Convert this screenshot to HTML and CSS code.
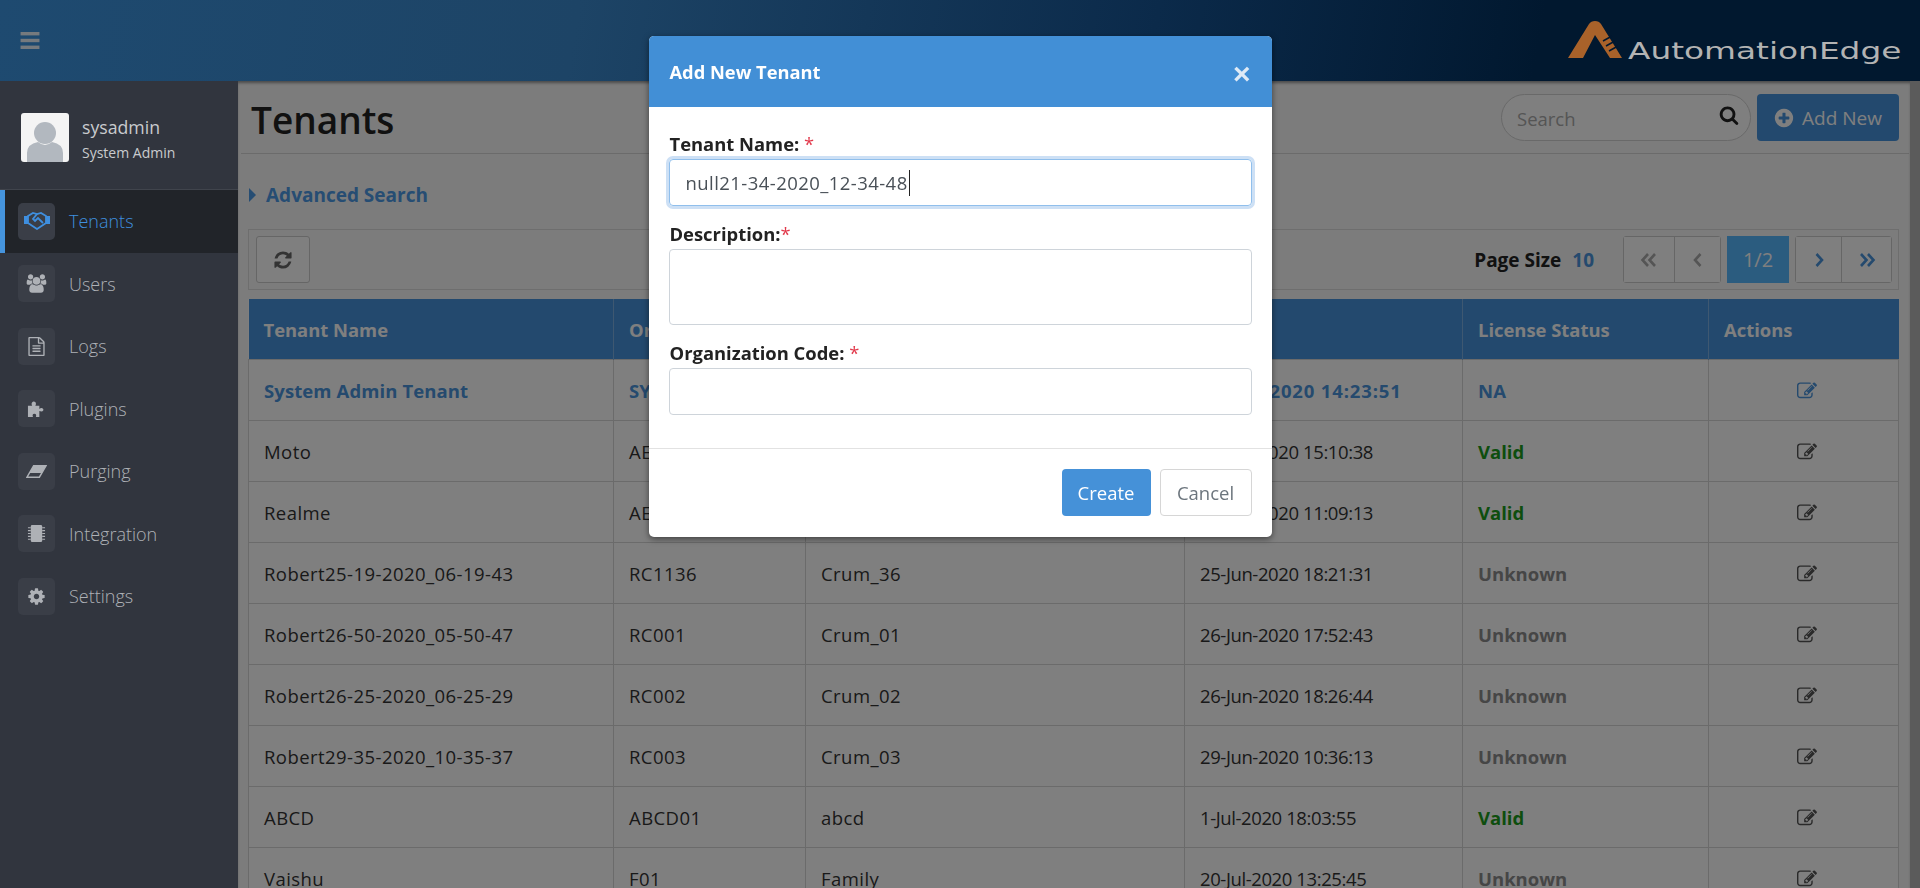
FILE: index.html
```html
<!DOCTYPE html>
<html lang="en">
<head>
    <meta charset="UTF-8">
    <title>Tenants</title>
    <link rel="stylesheet" href="styles.css">
</head>
<body>
    <svg class="icon-defs" width="0" height="0">
        <symbol id="i-edit" viewBox="0 0 1792 1792"><path d="M888 1184l116-116-152-152-116 116v56h96v96h56zm440-720q-16-16-33 1l-350 350q-17 17-1 33t33-1l350-350q17-17 1-33zm80 594v190q0 119-84.5 203.5t-203.5 84.5h-832q-119 0-203.5-84.5t-84.5-203.5v-832q0-119 84.5-203.5t203.5-84.5h832q63 0 117 25 15 7 18 23 3 17-9 29l-49 49q-14 14-32 8-23-6-45-6h-832q-66 0-113 47t-47 113v832q0 66 47 113t113 47h832q66 0 113-47t47-113v-126q0-13 9-22l64-64q15-15 35-7t20 29zm-96-738l288 288-672 672h-288v-288zm444 132l-92 92-288-288 92-92q28-28 68-28t68 28l152 152q28 28 28 68t-28 68z"/></symbol>
    </svg>

    <header class="topbar">
        <svg class="hamburger" viewBox="0 0 20 18"><rect width="20" height="3.6" y="0"/><rect width="20" height="3.6" y="7.2"/><rect width="20" height="3.6" y="14.4"/></svg>
        <div class="logo">
            <svg class="logo-mark" viewBox="0 0 55 38">
                <path d="M0 37 L21 3 Q23 0 27 0 Q31 0 33 3 L54 37 H42 L27 14 L15 37 Z" fill="#a9622a"/>
                <path d="M35 20 L44 15 M38 25 L47 20 M41 30 L50 25" stroke="#00172f" stroke-width="1.5"/>
            </svg>
            <span class="logo-text">AutomationEdge</span>
        </div>
    </header>

    <div class="layout">
        <aside class="sidebar">
            <div class="user-block">
                <svg class="avatar" viewBox="0 0 48 49">
                    <rect width="48" height="49" rx="3" fill="#f4f4f4"/>
                    <circle cx="24" cy="20" r="11" fill="#b2b8bf"/>
                    <path d="M6 49 V40 Q6 31 17 29 Q24 35 31 29 Q42 31 42 40 V49 Z" fill="#b2b8bf"/>
                </svg>
                <div class="user-info">
                    <div class="user-name">sysadmin</div>
                    <div class="user-role">System Admin</div>
                </div>
            </div>
            <nav class="menu">
                <a class="menu-item active">
                    <span class="menu-icon">
                        <svg viewBox="0 0 26 18" fill="none" stroke="currentColor" stroke-width="1.8"><path d="M0 4h4v8H0zM22 4h4v8h-4z" fill="currentColor" stroke="none"/><path d="M4 4l5-3 4 1 4-1 5 3v7l-9 6-9-6z"/><path d="M13 2L9 7l2 2 3-3 5 5"/></svg>
                    </span>
                    <span>Tenants</span>
                </a>
                <a class="menu-item">
                    <span class="menu-icon">
                        <svg viewBox="0 0 2048 1792" fill="currentColor"><path d="M657 896q-162 5-265 128h-134q-82 0-138-40.5t-56-118.5q0-353 124-353 6 0 43.5 21t97.5 42.5 119 21.5q67 0 133-23-5 37-5 66 0 139 81 256zm1071 637q0 120-73 189.5t-194 69.5h-874q-121 0-194-69.5t-73-189.5q0-53 3.5-103.5t14-109 26.5-108.5 43-97.5 62-81 85.5-53.5 111.5-20q10 0 43 21.5t73 48 107 48 135 21.5 135-21.5 107-48 73-48 43-21.5q61 0 111.5 20t85.5 53.5 62 81 43 97.5 26.5 108.5 14 109 3.5 103.5zm-1024-1277q0 106-75 181t-181 75-181-75-75-181 75-181 181-75 181 75 75 181zm704 384q0 159-112.5 271.5t-271.5 112.5-271.5-112.5-112.5-271.5 112.5-271.5 271.5-112.5 271.5 112.5 112.5 271.5zm576 225q0 78-56 118.5t-138 40.5h-134q-103-123-265-128 81-117 81-256 0-29-5-66 66 23 133 23 59 0 119-21.5t97.5-42.5 43.5-21q124 0 124 353zm-128-609q0 106-75 181t-181 75-181-75-75-181 75-181 181-75 181 75 75 181z"/></svg>
                    </span>
                    <span>Users</span>
                </a>
                <a class="menu-item">
                    <span class="menu-icon">
                        <svg viewBox="0 0 1792 1792" fill="currentColor"><path d="M1596 380q28 28 48 76t20 88v1152q0 40-28 68t-68 28h-1344q-40 0-68-28t-28-68v-1600q0-40 28-68t68-28h896q40 0 88 20t76 48zm-444-244v376h376q-10-29-22-41l-313-313q-12-12-41-22zm384 1528v-1024h-416q-40 0-68-28t-28-68v-416h-768v1536h1280zm-1024-864q0-14 9-23t23-9h704q14 0 23 9t9 23v64q0 14-9 23t-23 9h-704q-14 0-23-9t-9-23v-64zm736 224q14 0 23 9t9 23v64q0 14-9 23t-23 9h-704q-14 0-23-9t-9-23v-64q0-14 9-23t23-9h704zm0 256q14 0 23 9t9 23v64q0 14-9 23t-23 9h-704q-14 0-23-9t-9-23v-64q0-14 9-23t23-9h704z"/></svg>
                    </span>
                    <span>Logs</span>
                </a>
                <a class="menu-item">
                    <span class="menu-icon">
                        <svg viewBox="0 0 20 20" fill="currentColor"><path d="M1 7h4.5C4.5 5.8 4.5 3 7 2.600 9.600 2.400 10 5.600 8.700 7H13v3.500c1.300-1.200 3.200-1.200 4 0 .9 1.400-.3 3.400-4 2.200V19H9.300c.8-1.500.4-3.400-1.500-3.400-2 0-2.300 2-1.400 3.400H1z"/></svg>
                    </span>
                    <span>Plugins</span>
                </a>
                <a class="menu-item">
                    <span class="menu-icon">
                        <svg viewBox="0 0 22 14"><path d="M8 1h13L14 13H1z" fill="none" stroke="currentColor" stroke-width="1.500"/><path d="M8 1h13l-4.500 7.500h-13z" fill="currentColor"/></svg>
                    </span>
                    <span>Purging</span>
                </a>
                <a class="menu-item">
                    <span class="menu-icon">
                        <svg viewBox="0 0 18 20"><rect x="3" y="1" width="12" height="18" rx="1.500" fill="currentColor"/><path d="M0 4h3M0 7h3M0 10h3M0 13h3M0 16h3M15 4h3M15 7h3M15 10h3M15 13h3M15 16h3" stroke="currentColor" stroke-width="1.200"/></svg>
                    </span>
                    <span>Integration</span>
                </a>
                <a class="menu-item">
                    <span class="menu-icon">
                        <svg viewBox="0 0 1792 1792" fill="currentColor"><path d="M1152 896q0-106-75-181t-181-75-181 75-75 181 75 181 181 75 181-75 75-181zm512-109v222q0 12-8 23t-20 13l-185 28q-19 54-39 91 35 50 107 138 10 12 10 25t-9 23q-27 37-99 108t-94 71q-12 0-26-9l-138-108q-44 23-91 38-16 136-29 186-7 28-36 28h-222q-14 0-24.500-8.500t-11.500-21.500l-28-184q-49-16-90-37l-141 107q-10 9-25 9-14 0-25-11-126-114-165-168-7-10-7-23 0-12 8-23 15-21 51-66.500t54-70.500q-27-50-41-99l-183-27q-13-2-21-12.500t-8-23.500v-222q0-12 8-23t19-13l186-28q14-46 39-92-40-57-107-138-10-12-10-24 0-10 9-23 26-36 98.500-107.500t94.500-71.500q13 0 26 10l138 107q44-23 91-38 16-136 29-186 7-28 36-28h222q14 0 24.500 8.500t11.500 21.500l28 184q49 16 90 37l142-107q9-9 24-9 13 0 25 10 129 119 165 170 7 8 7 22 0 12-8 23-15 21-51 66.500t-54 70.500q26 50 41 98l183 28q13 2 21 12.500t8 23.500z"/></svg>
                    </span>
                    <span>Settings</span>
                </a>
            </nav>
        </aside>

        <main class="main">
            <div class="title-bar">
                <h1 class="page-title">Tenants</h1>
                <div class="title-actions">
                    <div class="search">
                        <span class="search-text">Search</span>
                        <svg class="search-icon" viewBox="0 0 1792 1792"><path d="M1216 832q0-185-131.500-316.500t-316.500-131.500-316.500 131.500-131.500 316.500 131.500 316.500 316.500 131.500 316.500-131.500 131.500-316.500zm512 832q0 52-38 90t-90 38q-54 0-90-38l-343-342q-179 124-399 124-143 0-273.500-55.500t-225-150-150-225-55.500-273.500 55.500-273.500 150-225 225-150 273.500-55.500 273.500 55.500 225 150 150 225 55.500 273.500q0 220-124 399l343 343q37 37 37 90z"/></svg>
                    </div>
                    <button class="btn-add">
                        <svg viewBox="0 0 1792 1792"><path transform="translate(-64 -64) scale(1.070)" d="M1344 960v-128q0-26-19-45t-45-19h-256v-256q0-26-19-45t-45-19h-128q-26 0-45 19t-19 45v256h-256q-26 0-45 19t-19 45v128q0 26 19 45t45 19h256v256q0 26 19 45t45 19h128q26 0 45-19t19-45v-256h256q26 0 45-19t19-45zm320-64q0 209-103 385.500t-279.500 279.500-385.500 103-385.500-103-279.500-279.500-103-385.500 103-385.500 279.500-279.500 385.500-103 385.500 103 279.500 279.500 103 385.500z"/></svg>
                        Add New
                    </button>
                </div>
            </div>

            <div class="advanced-search"><span class="caret-right"></span>Advanced Search</div>

            <div class="toolbar">
                <button class="tool-btn">
                    <svg viewBox="0 0 1792 1792"><path d="M1639 1056q0 5-1 7-64 268-268 434.500t-478 166.500q-146 0-282.500-55t-243.500-157l-129 129q-19 19-45 19t-45-19-19-45v-448q0-26 19-45t45-19h448q26 0 45 19t19 45-19 45l-137 137q71 66 161 102t187 36q134 0 250-65t186-179q11-17 53-117 8-23 30-23h192q13 0 22.500 9.500t9.500 22.500zm25-800v448q0 26-19 45t-45 19h-448q-26 0-45-19t-19-45 19-45l138-138q-148-137-349-137-134 0-250 65t-186 179q-11 17-53 117-8 23-30 23h-199q-13 0-22.500-9.500t-9.500-22.500v-7q65-268 270-434.500t480-166.500q146 0 284 55.500t245 156.500l130-129q19-19 45-19t45 19 19 45z"/></svg>
                </button>
                <div class="pager">
                    <span class="page-size">Page Size</span>
                    <span class="page-size-value">10</span>
                    <div class="page-group">
                        <button class="page-btn first muted"><svg viewBox="0 0 18 14"><path d="M8 1L2.500 7 8 13M15 1L9.500 7 15 13"/></svg></button>
                        <button class="page-btn muted"><svg viewBox="0 0 18 14"><path d="M11.500 1L6 7l5.500 6"/></svg></button>
                    </div>
                    <span class="page-current">1/2</span>
                    <div class="page-group">
                        <button class="page-btn next"><svg viewBox="0 0 18 14"><path d="M6.500 1L12 7l-5.500 6"/></svg></button>
                        <button class="page-btn last"><svg viewBox="0 0 18 14"><path d="M3 1l5.500 6L3 13M10 1l5.500 6-5.500 6"/></svg></button>
                    </div>
                </div>
            </div>

            <table class="tenants">
                <colgroup>
                    <col class="c-name"><col class="c-code"><col class="c-desc"><col class="c-date"><col class="c-status"><col>
                </colgroup>
                <thead>
                    <tr><th>Tenant Name</th><th>Organization Code</th><th>Description</th><th>Date</th><th>License Status</th><th>Actions</th></tr>
                </thead>
                <tbody>
                    <tr class="system">
                        <td>System Admin Tenant</td><td>SYSADMIN</td><td>System Admin</td><td class="date">16-Jun-2020 14:23:51</td><td>NA</td>
                        <td class="act"><svg class="edit"><use href="#i-edit"/></svg></td>
                    </tr>
                    <tr>
                        <td>Moto</td><td>AE001</td><td>Moto</td><td class="date">23-Jun-2020 15:10:38</td><td class="valid">Valid</td>
                        <td class="act"><svg class="edit"><use href="#i-edit"/></svg></td>
                    </tr>
                    <tr>
                        <td>Realme</td><td>AE002</td><td>Realme</td><td class="date">24-Jun-2020 11:09:13</td><td class="valid">Valid</td>
                        <td class="act"><svg class="edit"><use href="#i-edit"/></svg></td>
                    </tr>
                    <tr>
                        <td>Robert25-19-2020_06-19-43</td><td>RC1136</td><td>Crum_36</td><td class="date">25-Jun-2020 18:21:31</td><td class="unknown">Unknown</td>
                        <td class="act"><svg class="edit"><use href="#i-edit"/></svg></td>
                    </tr>
                    <tr>
                        <td>Robert26-50-2020_05-50-47</td><td>RC001</td><td>Crum_01</td><td class="date">26-Jun-2020 17:52:43</td><td class="unknown">Unknown</td>
                        <td class="act"><svg class="edit"><use href="#i-edit"/></svg></td>
                    </tr>
                    <tr>
                        <td>Robert26-25-2020_06-25-29</td><td>RC002</td><td>Crum_02</td><td class="date">26-Jun-2020 18:26:44</td><td class="unknown">Unknown</td>
                        <td class="act"><svg class="edit"><use href="#i-edit"/></svg></td>
                    </tr>
                    <tr>
                        <td>Robert29-35-2020_10-35-37</td><td>RC003</td><td>Crum_03</td><td class="date">29-Jun-2020 10:36:13</td><td class="unknown">Unknown</td>
                        <td class="act"><svg class="edit"><use href="#i-edit"/></svg></td>
                    </tr>
                    <tr>
                        <td>ABCD</td><td>ABCD01</td><td>abcd</td><td class="date">1-Jul-2020 18:03:55</td><td class="valid">Valid</td>
                        <td class="act"><svg class="edit"><use href="#i-edit"/></svg></td>
                    </tr>
                    <tr>
                        <td>Vaishu</td><td>F01</td><td>Family</td><td class="date">20-Jul-2020 13:25:45</td><td class="unknown">Unknown</td>
                        <td class="act"><svg class="edit"><use href="#i-edit"/></svg></td>
                    </tr>
                </tbody>
            </table>
            <div class="backdrop"></div>
        </main>
        <div class="scrollbar"></div>
    </div>

    <div class="modal-wrap">
        <div class="modal">
            <div class="modal-header">
                <span class="modal-title">Add New Tenant</span>
                <span class="modal-close">&times;</span>
            </div>
            <form class="modal-body">
                <label class="field-label">Tenant Name: <span class="req">*</span></label>
                <div class="input focused">null21-34-2020_12-34-48<span class="text-caret"></span></div>
                <label class="field-label">Description:<span class="req">*</span></label>
                <div class="input area"></div>
                <label class="field-label">Organization Code: <span class="req">*</span></label>
                <div class="input"></div>
            </form>
            <div class="modal-footer">
                <button class="btn-create">Create</button>
                <button class="btn-cancel">Cancel</button>
            </div>
        </div>
    </div>
</body>
</html>
```

FILE: styles.css
```css
* {
    box-sizing: border-box;
}
html, body {
    height: 100%;
}
body {
    margin: 0;
    overflow: hidden;
    font-family: "Open Sans", "Noto Sans", sans-serif;
    font-size: 16px;
    color: #333;
    background-color: #fff;
}
button {
    font-family: inherit;
}
.icon-defs {
    position: absolute;
}

/* header */
.topbar {
    height: 81px;
    display: flex;
    align-items: center;
    justify-content: space-between;
    padding: 0 19px 0 20px;
    background: linear-gradient(100deg, #1e4a70 0%, #1d4466 30%, #0b2a4a 60%, #01182f 80%, #01182f 100%);
}
.hamburger {
    width: 20px;
    height: 17px;
    fill: #767a7e;
}
.logo {
    display: flex;
    align-items: flex-end;
    gap: 5px;
    width: 333px;
    margin-bottom: 2px;
}
.logo-mark {
    width: 55px;
    height: 38px;
}
.logo-text {
    font-family: "DejaVu Sans", sans-serif;
    font-size: 23px;
    line-height: 28px;
    white-space: nowrap;
    color: #b3b3b3;
    margin-bottom: -6px;
    transform: scaleX(1.425);
    transform-origin: left center;
}

.layout {
    display: flex;
    height: calc(100% - 81px);
}

/* sidebar */
.sidebar {
    width: 238px;
    flex-shrink: 0;
    background-color: #31353e;
    color: #aeb1b6;
}
.user-block {
    height: 109px;
    display: flex;
    align-items: center;
    gap: 13px;
    padding: 0 0 0 21px;
    border-bottom: 1px solid #40444c;
}
.avatar {
    width: 48px;
    height: 49px;
    margin-top: 4px;
}
.user-info {
    margin-top: 9px;
}
.user-name {
    font-size: 17.7px;
    line-height: 24px;
    color: #c9cbce;
}
.user-role {
    font-size: 14px;
    line-height: 22px;
    color: #c9cbce;
    margin-top: 3px;
}
.menu-item {
    height: 62.5px;
    display: flex;
    align-items: center;
    gap: 14px;
    padding-left: 18px;
    font-size: 18px;
    font-weight: 300;
}
.menu-item.active {
    background-color: #212429;
    color: #3f8fdf;
    box-shadow: inset 5px 0 0 #4594dd;
}
.menu-icon {
    width: 37px;
    height: 37px;
    border-radius: 5px;
    background-color: #3a3e47;
    display: flex;
    align-items: center;
    justify-content: center;
}
.menu-icon svg {
    width: 21px;
    height: 19px;
}
.menu-item.active .menu-icon svg {
    width: 26px;
    height: 18px;
}

/* main */
.main {
    position: relative;
    flex: 1;
    padding: 0 11px 0 10px;
    background-color: #f8f8f8;
    overflow: hidden;
}
.backdrop {
    position: absolute;
    top: 0;
    left: 0;
    right: 0;
    bottom: 0;
    background-color: rgba(0,0,0,0.5);
    box-shadow: inset 0 3px 3px -1px rgba(0,0,0,0.4);
}
.scrollbar {
    width: 10px;
    flex-shrink: 0;
    background-color: #5b5b5b;
}
.title-bar {
    height: 73px;
    margin: 0 -10px 0 -7px;
    padding: 13px 10px 0 10px;
    display: flex;
    justify-content: space-between;
    border-bottom: 1px solid #d6d6d6;
}
.page-title {
    margin: 1px 0 0;
    font-size: 37px;
    line-height: 50px;
    font-weight: 550;
    color: #222;
}
.title-actions {
    display: flex;
    gap: 6px;
}
.search {
    width: 250px;
    height: 47px;
    display: flex;
    align-items: center;
    justify-content: space-between;
    padding: 2px 11px 0 15px;
    border: 1px solid #d2d2d2;
    border-radius: 24px;
    background-color: #fff;
}
.search-text {
    color: #aaa;
    font-size: 18.5px;
}
.search-icon {
    width: 20px;
    height: 20px;
    fill: #222;
    margin-top: -7px;
}
.btn-add {
    width: 142px;
    height: 47px;
    display: flex;
    align-items: center;
    justify-content: center;
    gap: 8px;
    border: none;
    border-radius: 4px;
    background-color: #4693dd;
    color: #fff;
    font-size: 19px;
}
.btn-add svg {
    width: 20px;
    height: 20px;
    fill: #fff;
}
.advanced-search {
    height: 75px;
    padding-top: 6px;
    display: flex;
    align-items: center;
    font-size: 19px;
    font-weight: 700;
    color: #4d9ae6;
}
.caret-right {
    width: 0;
    height: 0;
    margin-left: 1px;
    margin-right: 10px;
    border-left: 7px solid #4d9ae6;
    border-top: 7px solid transparent;
    border-bottom: 7px solid transparent;
}
.toolbar {
    height: 61px;
    display: flex;
    align-items: center;
    justify-content: space-between;
    padding: 0 6px 0 7px;
    border: 1px solid #dcdcdc;
}
.tool-btn {
    width: 54px;
    height: 47px;
    display: flex;
    align-items: center;
    justify-content: center;
    border: 1px solid #ccc;
    border-radius: 3px;
    background: #fff;
}
.tool-btn svg {
    width: 20px;
    height: 20px;
    fill: #666;
}
.pager {
    display: flex;
    align-items: center;
}
.page-size {
    font-size: 19px;
    font-weight: 700;
    color: #222;
    margin-right: 11px;
}
.page-size-value {
    font-size: 19px;
    font-weight: 700;
    color: #4a94dc;
    margin-right: 29px;
}
.page-group {
    display: flex;
    border: 1px solid #ccc;
    border-radius: 3px;
    height: 47px;
}
.page-btn {
    width: 50px;
    border: none;
    border-left: 1px solid #ccc;
    background: #fff;
    display: flex;
    align-items: center;
    justify-content: center;
    padding: 0;
}
.page-btn.first {
    border-left: none;
}
.page-btn.next {
    border-left: none;
    width: 45px;
}
.page-btn.muted + .page-btn.muted {
    width: 46px;
}
.page-btn svg {
    width: 18px;
    height: 14px;
    fill: none;
    stroke: #4a94dc;
    stroke-width: 2.6;
}
.page-btn.muted svg {
    stroke: #aaa;
}
.page-current {
    width: 62px;
    height: 47px;
    margin: 0 6px;
    display: flex;
    align-items: center;
    justify-content: center;
    background-color: #56b8ff;
    color: #fff;
    font-size: 20px;
}

/* table */
.tenants {
    width: 1651px;
    margin-top: 9px;
    border-collapse: collapse;
    table-layout: fixed;
    background-color: #fff;
}
.c-name { width: 365px; }
.c-code { width: 192px; }
.c-desc { width: 379px; }
.c-date { width: 278px; }
.c-status { width: 246px; }
.tenants th {
    height: 60px;
    padding: 2px 15px 0;
    text-align: left;
    font-size: 18.4px;
    font-weight: 700;
    white-space: nowrap;
    overflow: hidden;
    color: #fff;
    background-color: #4693dd;
    border-left: 1px solid #7db0e2;
}
.tenants th:first-child {
    border-left: none;
}
.tenants td {
    height: 61px;
    padding: 2px 15px 0;
    font-size: 18.5px;
    letter-spacing: 0.44px;
    white-space: nowrap;
    overflow: hidden;
    border: 1px solid #d6d6d6;
}
.tenants td.date {
    letter-spacing: -0.4px;
}
.tenants .system td {
    font-weight: 700;
    letter-spacing: 0.1px;
    color: #4a94dc;
}
.tenants .system td.date {
    letter-spacing: 0.85px;
}
.tenants .valid, .tenants .unknown {
    font-weight: 700;
    letter-spacing: 0;
}
.tenants .valid {
    color: #1c9c1c;
}
.tenants .unknown {
    color: #8c8c8c;
}
.tenants .act {
    text-align: center;
    padding-left: 22px;
}
.edit {
    width: 20px;
    height: 20px;
    fill: #555;
    display: inline-block;
    vertical-align: middle;
    margin-top: -4px;
}
.system .edit {
    fill: #4a94dc;
}

/* modal */
.modal-wrap {
    position: fixed;
    top: 36px;
    left: 0;
    right: 0;
    display: flex;
    justify-content: center;
}
.modal {
    width: 623px;
    height: 501px;
    border-radius: 5px;
    background-color: #fff;
    overflow: hidden;
    box-shadow: 0 2px 6px rgba(0,0,0,0.5);
}
.modal-header {
    height: 71px;
    padding: 0 20px 0 21px;
    display: flex;
    align-items: center;
    justify-content: space-between;
    background-color: #428fd6;
    color: #fff;
}
.modal-title {
    font-size: 18.3px;
    font-weight: 700;
}
.modal-close {
    font-family: "Liberation Sans", sans-serif;
    font-size: 30px;
    font-weight: 700;
    line-height: 30px;
    color: #dfeaf6;
    padding-top: 4px;
    margin-right: 1px;
}
.modal-body {
    height: 342px;
    padding: 25px 20px 0;
    border-bottom: 1px solid #e2e2e2;
}
.field-label {
    display: block;
    padding-left: 1px;
    font-size: 18.4px;
    line-height: 24px;
    font-weight: 700;
    color: #222;
}
.req {
    color: #e23a4c;
    font-weight: 400;
}
.input {
    height: 47px;
    margin: 3px 0 16px;
    padding-left: 16px;
    display: flex;
    align-items: center;
    border: 1px solid #ced4da;
    border-radius: 4px;
    font-size: 18.5px;
    letter-spacing: 0.44px;
    color: #495057;
}
.input.focused {
    border-color: #90bfec;
    box-shadow: 0 0 0 3px #cde0f5;
}
.input.area {
    height: 76px;
}
.text-caret {
    width: 1px;
    height: 26px;
    background-color: #222;
    margin-left: 1px;
}
.modal-footer {
    display: flex;
    justify-content: flex-end;
    gap: 9px;
    padding: 20px 20px 0;
}
.btn-create, .btn-cancel {
    height: 47px;
    border-radius: 4px;
    font-size: 18.5px;
}
.btn-create {
    width: 89px;
    border: none;
    background-color: #4591d8;
    color: #fff;
}
.btn-cancel {
    width: 92px;
    border: 1px solid #d6d6d6;
    background-color: #fff;
    color: #6c757d;
}
```
